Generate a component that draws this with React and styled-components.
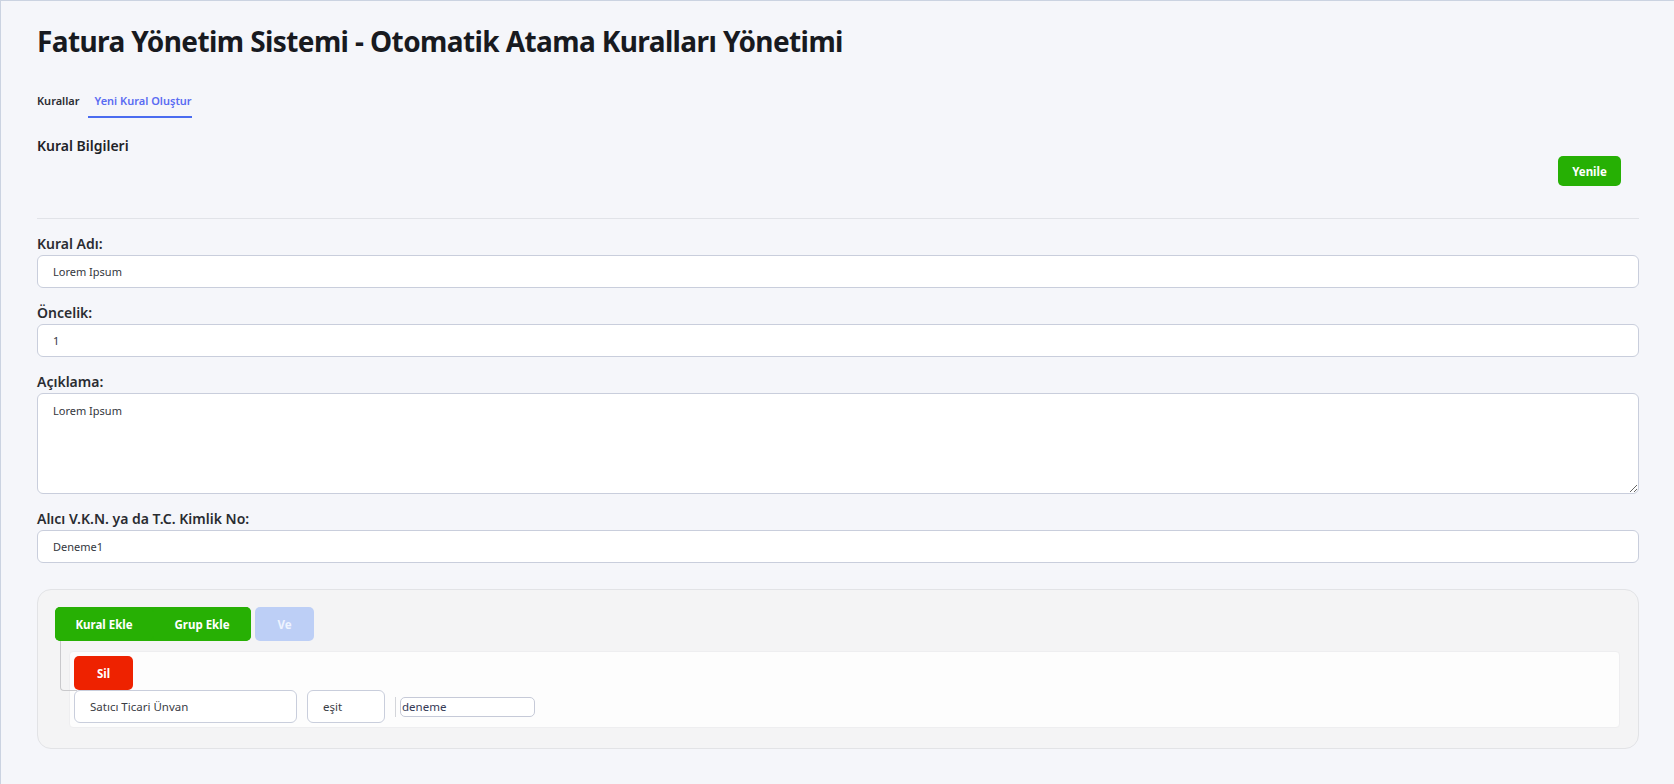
import React from "react";
import styled, { createGlobalStyle } from "styled-components";

const GlobalStyle = createGlobalStyle`
  html, body { margin: 0; padding: 0; }
  body {
    background: #f5f6fa;
    font-family: "Noto Sans", Lato, "Liberation Sans", sans-serif;
    color: #1f2328;
  }
  * { box-sizing: border-box; }
`;

const Page = styled.div`
  min-height: 100vh;
  border-top: 1px solid #cbd3e1;
  border-left: 1px solid #cbd3e1;
  padding: 23px 35px 40px 36px;
`;

const Title = styled.h1`
  margin: 0;
  font-size: 28px;
  line-height: 34px;
  font-weight: 700;
  letter-spacing: -0.6px;
  color: #181a1f;
`;

const TabList = styled.div`
  display: flex;
  gap: 8px;
  margin: 35px 0 0 -7px;
`;

const Tab = styled.button`
  background: none;
  border: none;
  border-bottom: 2px solid ${(p) => (p.$active ? "#4a6cf0" : "transparent")};
  padding: 0 0 7px 7px;
  font-family: inherit;
  font-size: 11px;
  line-height: 16px;
  font-weight: 600;
  color: ${(p) => (p.$active ? "#5a6cf2" : "#2b2d33")};
  cursor: pointer;
`;

const Header = styled.div`
  margin-top: 18px;
  padding-bottom: 32px;
  border-bottom: 1px solid #e1e3e8;
`;

const SectionTitle = styled.div`
  font-size: 14px;
  line-height: 20px;
  font-weight: 600;
  color: #1f2328;
`;

const HeaderActions = styled.div`
  display: flex;
  justify-content: flex-end;
  padding-right: 18px;
`;

const Button = styled.button`
  height: ${(p) => p.$h || 34}px;
  min-width: ${(p) => p.$w || 0}px;
  padding: 0 ${(p) => p.$px ?? 16}px;
  border: none;
  border-radius: 5px;
  background: ${(p) => p.$bg};
  color: ${(p) => p.$color || "#ffffff"};
  font-family: inherit;
  font-size: 11.5px;
  font-weight: 700;
  cursor: pointer;
`;

const Form = styled.div`
  padding-top: 15px;
`;

const Field = styled.div`
  margin-bottom: 15px;
`;

const Label = styled.label`
  display: block;
  font-size: 14px;
  line-height: 20px;
  font-weight: 600;
  color: #2a2c31;
  margin-bottom: 1px;
`;

const Input = styled.input`
  display: block;
  width: 100%;
  height: 33px;
  padding: 0 15px;
  border: 1px solid #c9cedc;
  border-radius: 6px;
  background: #ffffff;
  font-family: inherit;
  font-size: 11px;
  color: #33363d;
  outline: none;
`;

const TextArea = styled.textarea`
  display: block;
  width: 100%;
  height: 101px;
  padding: 9px 15px;
  margin-bottom: 2px;
  border: 1px solid #c9cedc;
  border-radius: 6px;
  background: #ffffff;
  font-family: inherit;
  font-size: 11px;
  color: #33363d;
  outline: none;
  resize: vertical;
`;

const Builder = styled.div`
  margin-top: 26px;
  background: #f4f4f5;
  border: 1px solid #e2e3e6;
  border-radius: 14px;
  padding: 17px 18px 20px 17px;
`;

const GroupHeader = styled.div`
  display: flex;
  gap: 4px;
`;

const ButtonGroup = styled.div`
  display: flex;
  background: #27b004;
  border-radius: 5px;
  overflow: hidden;
`;

const RulesArea = styled.div`
  position: relative;
  padding: 10px 0 0 14px;

  &::before {
    content: "";
    position: absolute;
    left: 5px;
    top: 0;
    width: 16px;
    height: 49px;
    border-left: 1px solid #c9c9cc;
    border-bottom: 1px solid #c9c9cc;
    border-bottom-left-radius: 4px;
    z-index: 1;
    pointer-events: none;
  }
`;

const RuleCard = styled.div`
  background: #fdfdfd;
  border: 1px solid #eeeef0;
  border-radius: 4px;
  padding: 4px;
`;

const RuleRow = styled.div`
  display: flex;
  align-items: center;
  gap: 10px;
`;

const SelectBox = styled.div`
  width: ${(p) => p.$w}px;
  height: 33px;
  display: flex;
  align-items: center;
  padding: 0 15px;
  border: 1px solid #c9cedc;
  border-radius: 6px;
  background: #ffffff;
  font-size: 11.5px;
  color: #3a3d45;
`;

const ValueWrap = styled.div`
  display: flex;
  align-items: center;
  gap: 4px;
`;

const Separator = styled.div`
  width: 1px;
  height: 20px;
  background: #d3d5da;
`;

const SmallInput = styled.input`
  width: 135px;
  height: 20px;
  padding: 0 1px;
  border: 1px solid #c6cad8;
  border-radius: 5px;
  background: #ffffff;
  font-family: inherit;
  font-size: 11.5px;
  color: #353a56;
  outline: none;
`;

export default function App() {
  return (
    <>
      <GlobalStyle />
      <Page>
        <Title>Fatura Yönetim Sistemi - Otomatik Atama Kuralları Yönetimi</Title>

        <TabList>
          <Tab>Kurallar</Tab>
          <Tab $active>Yeni Kural Oluştur</Tab>
        </TabList>

        <Header>
          <SectionTitle>Kural Bilgileri</SectionTitle>
          <HeaderActions>
            <Button $bg="#26b004" $h={30} $w={63} $px={12}>Yenile</Button>
          </HeaderActions>
        </Header>

        <Form>
          <Field>
            <Label>Kural Adı:</Label>
            <Input defaultValue="Lorem Ipsum" />
          </Field>
          <Field>
            <Label>Öncelik:</Label>
            <Input defaultValue="1" />
          </Field>
          <Field>
            <Label>Açıklama:</Label>
            <TextArea defaultValue="Lorem Ipsum" />
          </Field>
          <Field>
            <Label>Alıcı V.K.N. ya da T.C. Kimlik No:</Label>
            <Input defaultValue="Deneme1" />
          </Field>
        </Form>

        <Builder>
          <GroupHeader>
            <ButtonGroup>
              <Button $bg="#27b004" $w={98} $px={10}>Kural Ekle</Button>
              <Button $bg="#27b004" $w={98} $px={10}>Grup Ekle</Button>
            </ButtonGroup>
            <Button $bg="#bdcff6" $color="#eef3ff" $w={59} $px={10}>Ve</Button>
          </GroupHeader>

          <RulesArea>
            <RuleCard>
              <Button $bg="#ee2200" $w={59} $px={10}>Sil</Button>
              <RuleRow>
                <SelectBox $w={223}>Satıcı Ticari Ünvan</SelectBox>
                <SelectBox $w={78}>eşit</SelectBox>
                <ValueWrap>
                  <Separator />
                  <SmallInput defaultValue="deneme" />
                </ValueWrap>
              </RuleRow>
            </RuleCard>
          </RulesArea>
        </Builder>
      </Page>
    </>
  );
}
